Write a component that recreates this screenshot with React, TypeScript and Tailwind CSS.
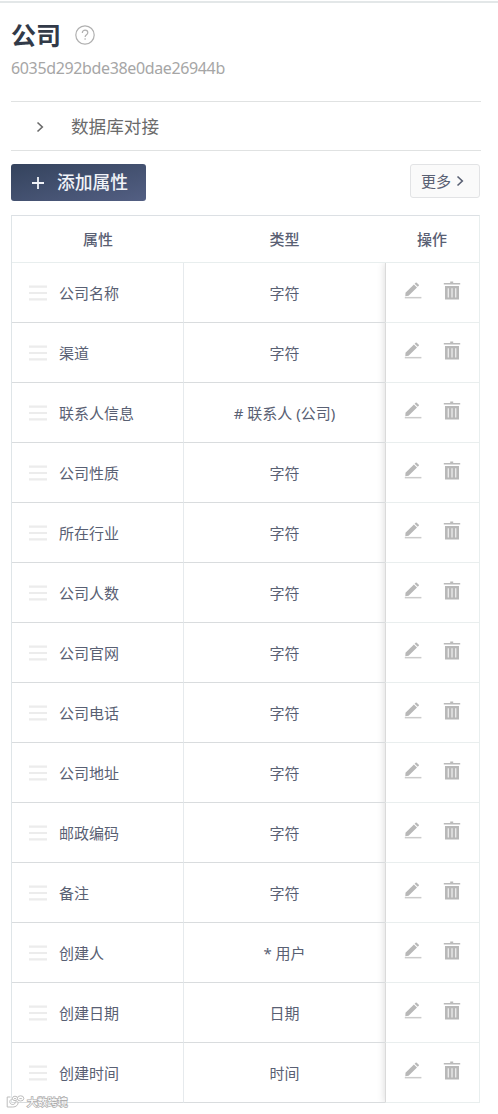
import type { ReactNode } from "react";

interface Attribute {
  name: string;
  type: string;
}

const attributes: Attribute[] = [
  { name: "公司名称", type: "字符" },
  { name: "渠道", type: "字符" },
  { name: "联系人信息", type: "# 联系人 (公司)" },
  { name: "公司性质", type: "字符" },
  { name: "所在行业", type: "字符" },
  { name: "公司人数", type: "字符" },
  { name: "公司官网", type: "字符" },
  { name: "公司电话", type: "字符" },
  { name: "公司地址", type: "字符" },
  { name: "邮政编码", type: "字符" },
  { name: "备注", type: "字符" },
  { name: "创建人", type: "* 用户" },
  { name: "创建日期", type: "日期" },
  { name: "创建时间", type: "时间" },
];

function Chevron({ className }: { className: string }) {
  return (
    <svg viewBox="0 0 8 12" className={className} fill="none" stroke="currentColor" strokeWidth="1.6" aria-hidden>
      <path d="M1.5 1.5L6.3 6l-4.8 4.5" />
    </svg>
  );
}

function HelpIcon() {
  return (
    <svg viewBox="0 0 20 20" className="h-5 w-5 text-[#b0b0b0]" fill="none" stroke="currentColor" strokeWidth="1.2" aria-hidden>
      <circle cx="10" cy="10" r="9.2" />
      <path d="M7.3 8c0-1.8 1.2-2.8 2.8-2.8s2.7 1 2.7 2.5c0 2-2.7 2.1-2.7 4.2" />
      <path d="M10.1 13.3v1.4" />
    </svg>
  );
}

function DragHandle() {
  return (
    <svg viewBox="0 0 18 16" className="h-4 w-[18px] shrink-0" fill="none" stroke="#ececec" strokeWidth="2.2" aria-hidden>
      <path d="M0 1.7h18M0 8h18M0 14.3h18" />
    </svg>
  );
}

function EditIcon() {
  return (
    <svg viewBox="0 0 18 18" className="h-[18px] w-[18px]" fill="#b8b8b8" aria-hidden>
      <path d="M1.5 11.7l8.4-8.3 3.1 3.1-8.4 8.2-3.3.5z" />
      <path d="M10.6 2.7l1.1-1q.5-.4 1 0l2.1 2.1q.4.4 0 .9l-1.1 1.1z" />
      <path d="M.8 15.9h16.6v1.5H.8z" fill="#cbcbcb" />
    </svg>
  );
}

function TrashIcon() {
  return (
    <svg viewBox="0 0 18 20" className="h-5 w-[18px]" aria-hidden>
      <path d="M7.2.6h3v1.4h-3zM.8 2h16.4v1.6H.8z" fill="#bababa" />
      <path d="M2 5h14v13.5H2z" fill="#b8b8b8" />
      <path d="M5.3 7.2v9.2M9 7.2v9.2M12.7 7.2v9.2" stroke="#ededed" strokeWidth="1.3" />
    </svg>
  );
}

function HeaderCell({ children }: { children: ReactNode }) {
  return <div className="flex items-center justify-center pt-px font-medium">{children}</div>;
}

function AttributeRow({ attribute }: { attribute: Attribute }) {
  return (
    <div className="grid h-[60px] grid-cols-[172px_201px_1fr]">
      <div className="flex items-center border-r border-b border-r-[#e6eaed] border-b-[#d9dcde] pl-[17px]">
        <DragHandle />
        <span className="ml-3 pt-px">{attribute.name}</span>
      </div>
      <div className="flex items-center justify-center border-b border-[#d9dcde] pt-px">
        {attribute.type}
      </div>
      <div className="flex border-b border-l border-b-[#e9eeee] border-l-[#dadada] bg-white pt-[18px] pl-[18px]">
        <EditIcon />
        <span className="ml-[21px]">
          <TrashIcon />
        </span>
      </div>
    </div>
  );
}

function Watermark() {
  return (
    <div className="absolute top-[1095px] left-[6px] flex items-center gap-[2px]">
      <svg viewBox="0 0 19 14" className="h-3.5 w-[19px]" fill="white" stroke="#bdbdbd" strokeWidth="1" aria-hidden>
        <path d="M4.5 2H1.2v10h5.3c3.8 0 5.8-2.1 5.6-5.1H9.3c0 1.7-1 2.6-2.5 2.6-2 0-3-1.2-3-2.8 0-1.5 1-2.5 2.7-2.7" />
        <ellipse cx="9" cy="3.4" rx="2.6" ry="2.2" />
        <ellipse cx="14.6" cy="3.4" rx="3.2" ry="2.6" />
        <path d="M8 3.6h2M13.3 3.6h2.5" />
      </svg>
      <span className="text-[10.2px] leading-[14px] text-white [-webkit-text-stroke:1.5px_#adadad] [paint-order:stroke_fill]">
        大数跨境
      </span>
    </div>
  );
}

export default function App() {
  return (
    <div className="relative h-[1114px] w-[498px] overflow-hidden bg-white font-['Noto_Sans','Noto_Sans_CJK_SC',sans-serif] text-[15px] text-[#596073]">
      <div className="h-[3px] border-b-2 border-[#e3e7e8]" />
      <main className="ml-[11px] w-[470px]">
        <header className="h-[98px]">
          <div className="flex h-[50px] items-center pt-[13px]">
            <h1 className="text-[25px] leading-9 font-bold text-[#323a48]">公司</h1>
            <span className="mt-px ml-[14px]">
              <HelpIcon />
            </span>
          </div>
          <p className="mt-[3px] text-base leading-6 tracking-[-0.36px] text-[#a6a6a6]">6035d292bde38e0dae26944b</p>
        </header>

        <section className="flex h-[50px] items-center border-y border-[#e0e2e2] pl-[25px] text-[17.6px] text-[#6a6a6a]">
          <Chevron className="mt-px h-3 w-2" />
          <span className="ml-[27px]">数据库对接</span>
        </section>

        <div className="flex h-[64px] items-start justify-between pt-[13px]">
          <button className="flex h-[37px] w-[135px] items-center rounded-[3px] bg-linear-to-br from-[#34435d] to-[#535f83] pl-[21px] text-[17.8px] font-medium text-[#f1f3f8]">
            <svg viewBox="0 0 12 12" className="h-3 w-3" stroke="currentColor" strokeWidth="1.8" aria-hidden>
              <path d="M6 0v12M0 6h12" />
            </svg>
            <span className="ml-[13px]">添加属性</span>
          </button>
          <button className="mr-px flex h-[34px] w-[70px] items-center rounded-[3px] border border-[#e2e3e5] bg-[#fafafa] pl-[10px]">
            <span>更多</span>
            <Chevron className="ml-[5px] h-3 w-2" />
          </button>
        </div>

        <div className="mr-px border border-t-[#dce0e4] border-r-[#e8eeee] border-b-0 border-l-[#dfe5e8]">
          <div className="grid h-[47px] grid-cols-[172px_201px_1fr] border-b border-[#e8eeee]">
            <HeaderCell>属性</HeaderCell>
            <HeaderCell>类型</HeaderCell>
            <HeaderCell>操作</HeaderCell>
          </div>
          <div className="relative isolate overflow-hidden">
            {/* shadow cast by the fixed operation column */}
            <div className="absolute inset-y-0 right-0 -z-10 w-[94px] shadow-[0_0_8px_rgba(0,0,0,0.16)]" />
            {attributes.map((attribute) => (
              <AttributeRow key={attribute.name} attribute={attribute} />
            ))}
          </div>
        </div>
      </main>
      <Watermark />
    </div>
  );
}
